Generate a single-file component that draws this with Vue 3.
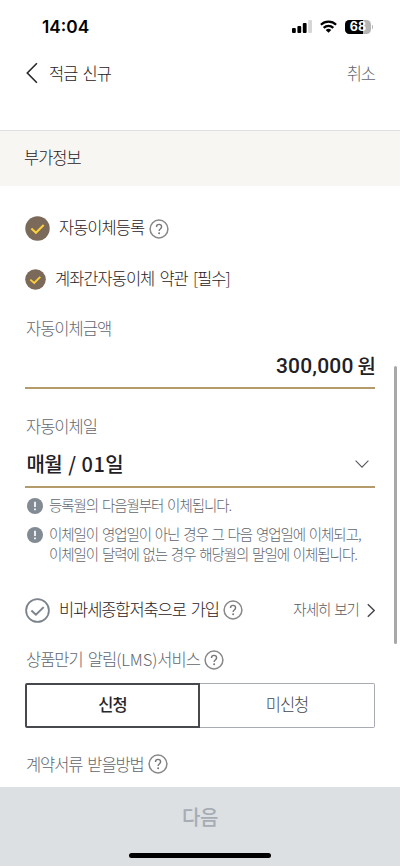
<template>
  <div class="screen">
    <header class="status">
      <span class="status__time">14:04</span>
      <div class="status__icons">
        <svg width="20" height="13" viewBox="0 0 20 13" aria-hidden="true">
          <rect x="0" y="8" width="3.8" height="5" rx="1" />
          <rect x="5.4" y="6" width="3.8" height="7" rx="1" />
          <rect x="10.8" y="3" width="3.8" height="10" rx="1" />
          <rect x="16.2" y="0" width="3.8" height="13" rx="1" fill="#d6d6d6" />
        </svg>
        <svg class="status__wifi" width="17" height="13" viewBox="0 0 17 13" aria-hidden="true">
          <g fill="none" stroke="#000" stroke-width="2.3">
            <path d="M0.9 4.7a10.9 10.9 0 0 1 15.2 0" />
            <path d="M3.7 7.8a7 7 0 0 1 9.6 0" />
          </g>
          <path d="M8.5 12.8 5.7 10a4.1 4.1 0 0 1 5.6 0z" />
        </svg>
        <div class="battery">
          <span class="battery__body">
            <i class="battery__fill" :style="{ width: battery + '%' }"></i>
            <b class="battery__value">{{ battery }}</b>
          </span>
          <i class="battery__cap"></i>
        </div>
      </div>
    </header>

    <nav class="nav">
      <svg width="12" height="22" viewBox="0 0 12 22" aria-hidden="true">
        <path d="M10.9 1.2 1.3 11l9.6 9.8" fill="none" stroke="#26282c" stroke-width="1.6" />
      </svg>
      <h1 class="nav__title">적금 신규</h1>
      <button class="nav__cancel">취소</button>
    </nav>

    <h2 class="section">부가정보</h2>

    <main class="content">
      <div class="check check--lg">
        <svg width="25" height="25" viewBox="0 0 25 25" aria-hidden="true">
          <circle cx="12.5" cy="12.5" r="12.2" fill="#7b6959" />
          <path d="m6.4 12.5 4.5 4.2 7.8-7.6" fill="none" stroke="#fbcf3b" stroke-width="2.1" />
        </svg>
        <span class="check__text">자동이체등록</span>
        <svg class="help" viewBox="0 0 20 20"><use href="#help-icon" /></svg>
      </div>

      <div class="check check--sm">
        <svg width="21" height="21" viewBox="0 0 21 21" aria-hidden="true">
          <circle cx="10.5" cy="10.5" r="10.3" fill="#7b6959" />
          <path d="m5.3 10.6 3.9 3.4 6.1-6.2" fill="none" stroke="#fbcf3b" stroke-width="1.8" />
        </svg>
        <span class="check__text">계좌간자동이체 약관 [필수]</span>
      </div>

      <label class="label label--amount"><span>자동이체금액</span></label>
      <div class="field field--amount">
        <span class="field__number">300,000</span>
        <span class="field__unit">원</span>
      </div>

      <label class="label label--day"><span>자동이체일</span></label>
      <div class="field field--day">
        <span>매월 / <span class="field__day">01</span>일</span>
        <svg width="14" height="9" viewBox="0 0 14 9" aria-hidden="true">
          <path d="m.6 .6 6.4 6.6L13.4 .6" fill="none" stroke="#55585e" stroke-width="1.1" />
        </svg>
      </div>

      <ul class="notes">
        <li v-for="(lines, i) in notes" :key="i" class="note">
          <svg width="16" height="16" viewBox="0 0 16 16" aria-hidden="true">
            <circle cx="8" cy="8" r="8" fill="#828a94" />
            <path d="M8 3.8v5.1M8 10.5v1.7" stroke="#fff" stroke-width="1.7" />
          </svg>
          <p><span v-for="line in lines" :key="line" class="note__line">{{ line }}</span></p>
        </li>
      </ul>

      <div class="check check--taxfree">
        <svg width="25" height="25" viewBox="0 0 25 25" aria-hidden="true">
          <circle cx="12.5" cy="12.5" r="11.4" fill="none" stroke="#7c838d" stroke-width="1.8" />
          <path d="m6.4 12.5 4.5 4.2 7.8-7.6" fill="none" stroke="#7c838d" stroke-width="2" />
        </svg>
        <span class="check__text">비과세종합저축으로 가입</span>
        <svg class="help" viewBox="0 0 20 20"><use href="#help-icon" /></svg>
        <a class="more">
          <span>자세히 보기</span>
          <svg width="9" height="15" viewBox="0 0 9 15" aria-hidden="true">
            <path d="m1.8 1.2 6.4 6.3-6.4 6.3" fill="none" stroke="#44464b" stroke-width="1.4" />
          </svg>
        </a>
      </div>

      <div class="label label--lms">
        <span>상품만기 알림<span class="label__latin">(LMS)</span>서비스</span>
        <svg class="help" viewBox="0 0 20 20"><use href="#help-icon" /></svg>
      </div>
      <div class="segment">
        <button
          v-for="option in options"
          :key="option"
          class="segment__item"
          :class="{ 'segment__item--active': option === selected }"
          @click="selected = option"
        >{{ option }}</button>
      </div>

      <div class="label label--docs">
        <span>계약서류 받을방법</span>
        <svg class="help" viewBox="0 0 20 20"><use href="#help-icon" /></svg>
      </div>
    </main>

    <footer class="footer">
      <button class="footer__next" disabled>다음</button>
      <i class="footer__home"></i>
    </footer>

    <i class="scrollbar"></i>

    <svg class="defs" aria-hidden="true">
      <symbol id="help-icon" viewBox="0 0 20 20">
        <circle cx="10" cy="10" r="8.9" fill="none" stroke="#888" stroke-width="1.5" />
        <path
          d="M7.5 8c0-1.6 1-2.6 2.5-2.6s2.6.9 2.6 2.3c0 1.2-.7 1.7-1.4 2.3-.8.6-1.1 1-1.1 2"
          fill="none" stroke="#777" stroke-width="1.4"
        />
        <circle cx="10.1" cy="14.2" r="1" fill="#777" />
      </symbol>
    </svg>
  </div>
</template>

<script setup>
import { ref } from 'vue';

const battery = 68;
const options = ['신청', '미신청'];
const selected = ref('신청');

const notes = [
  ['등록월의 다음월부터 이체됩니다.'],
  ['이체일이 영업일이 아닌 경우 그 다음 영업일에 이체되고,', '이체일이 달력에 없는 경우 해당월의 말일에 이체됩니다.']
];
</script>

<style>
body {
  margin: 0;
  background: #fff;
}
</style>

<style scoped>
.screen {
  position: relative;
  display: flex;
  flex-direction: column;
  width: 400px;
  height: 866px;
  overflow: hidden;
  background: #fff;
  color: #1f2125;
  font-family: "Noto Sans CJK KR", sans-serif;
  font-size: 16.5px;
  font-weight: 300;
  letter-spacing: -1px;
  line-height: 20px;
  white-space: nowrap;
  word-spacing: 2.5px;
}

.screen * {
  box-sizing: border-box;
}

svg {
  display: block;
  flex: none;
}

button {
  padding: 0;
  border: 0;
  background: none;
  color: inherit;
  font: inherit;
  letter-spacing: inherit;
}

.status {
  display: flex;
  align-items: center;
  justify-content: space-between;
  height: 53px;
  padding: 0 27px 0 42px;
}

.status__time {
  color: #000;
  font-family: Inter, sans-serif;
  font-size: 17.3px;
  font-weight: 600;
  letter-spacing: 0;
}

.status__icons {
  display: flex;
  align-items: center;
}

.status__wifi {
  margin: 0 8px;
}

.battery {
  display: flex;
  align-items: center;
  gap: 1px;
}

.battery__body {
  position: relative;
  width: 26px;
  height: 14px;
  overflow: hidden;
  background: #b5b5b5;
  border-radius: 4.5px;
}

.battery__fill {
  display: block;
  height: 100%;
  background: #000;
}

.battery__value {
  position: absolute;
  inset: 0;
  color: #fff;
  font-family: Inter, sans-serif;
  font-size: 12.5px;
  font-weight: 700;
  letter-spacing: 0;
  line-height: 14px;
  text-align: center;
}

.battery__cap {
  width: 1px;
  height: 4px;
  background: #b5b5b5;
  border-radius: 0 1px 1px 0;
}

.nav {
  display: flex;
  align-items: center;
  height: 77px;
  padding: 0 25px 37px 26px;
}

.nav__title {
  margin: 0 0 0 11px;
  padding-bottom: 1px;
  font-size: inherit;
  font-weight: inherit;
}

.nav__cancel {
  margin-left: auto;
  color: #62666d;
}

.section {
  height: 56px;
  margin: 0;
  padding: 0 24px;
  border-top: 1px solid #dfdfe1;
  background: #f7f6f3;
  font-size: inherit;
  font-weight: inherit;
  line-height: 52px;
}

.content {
  flex: 1;
  padding: 17px 25px 0;
}

.check {
  display: flex;
  align-items: center;
  margin-left: -0.5px;
}

.check--lg {
  height: 51px;
}

.check--sm {
  height: 51px;
}

.check__text {
  margin-left: 9.5px;
  padding-bottom: 3px;
}

.help {
  width: 20px;
  height: 20px;
  margin-left: 4.5px;
}

.label {
  display: flex;
  align-items: center;
  padding-left: 1px;
  color: #62666d;
}

.label > span {
  padding-bottom: 1px;
}

.label__latin {
  letter-spacing: -0.1px;
}

.label--amount {
  height: 46px;
}

.label--day {
  height: 48px;
  margin-top: 13px;
}

.label--lms {
  height: 53px;
  padding-top: 6px;
}

.label--docs {
  height: 59px;
  padding-top: 13px;
  letter-spacing: -1.1px;
}

.field {
  display: flex;
  align-items: center;
  height: 38px;
  border-bottom: 2px solid #b39b6b;
  font-size: 20px;
  font-weight: 500;
}

.field--amount {
  justify-content: flex-end;
  padding-bottom: 6px;
}

.field__number {
  font-family: Roboto, sans-serif;
  font-size: 21px;
  letter-spacing: 0.2px;
}

.field__unit {
  margin-left: 4px;
}

.field--day {
  justify-content: space-between;
  padding: 0 6px 8px 1.5px;
  letter-spacing: -0.7px;
}

.field__day {
  letter-spacing: 0.4px;
}

.notes {
  margin: 8px 0 0;
  padding: 0 0 0 2px;
  list-style: none;
  color: #62666d;
  font-size: 14.5px;
  letter-spacing: -1.05px;
  word-spacing: 1.6px;
}

.note {
  display: flex;
  gap: 6px;
}

.note + .note {
  margin-top: 9px;
}

.note svg {
  margin-top: 2px;
}

.note p {
  margin: -1px 0 1px;
}

.note__line {
  display: block;
}

.check--taxfree {
  height: 40px;
  margin-top: 25px;
  letter-spacing: -1.1px;
}

.more {
  display: flex;
  align-items: center;
  gap: 7px;
  margin-left: auto;
  color: #55585e;
  font-size: 14.5px;
  letter-spacing: -0.95px;
  word-spacing: 1.5px;
}

.more span {
  padding-bottom: 2px;
}

.segment {
  display: flex;
  height: 45px;
}

.segment__item {
  width: 50%;
  padding-bottom: 4px;
  border: 1px solid #a9abb3;
  border-left: 0;
  border-radius: 0 2px 2px 0;
  color: #44464b;
}

.segment__item--active {
  border: 2px solid #48484f;
  border-radius: 2px 0 0 2px;
  color: #26282c;
  font-weight: 500;
}

.footer {
  display: flex;
  flex-direction: column;
  align-items: center;
  justify-content: space-between;
  height: 79px;
  padding: 20px 0 8px;
  background: #dce0e3;
}

.footer__next {
  color: #a6acb5;
  font-size: 20px;
  font-weight: 500;
  letter-spacing: -0.3px;
}

.footer__home {
  width: 142px;
  height: 5px;
  background: #000;
  border-radius: 3px;
}

.scrollbar {
  position: absolute;
  top: 366px;
  right: 3px;
  width: 3px;
  height: 278px;
  background: #a8a8a8;
  border-radius: 2px;
}

.defs {
  position: absolute;
  width: 0;
  height: 0;
}
</style>
